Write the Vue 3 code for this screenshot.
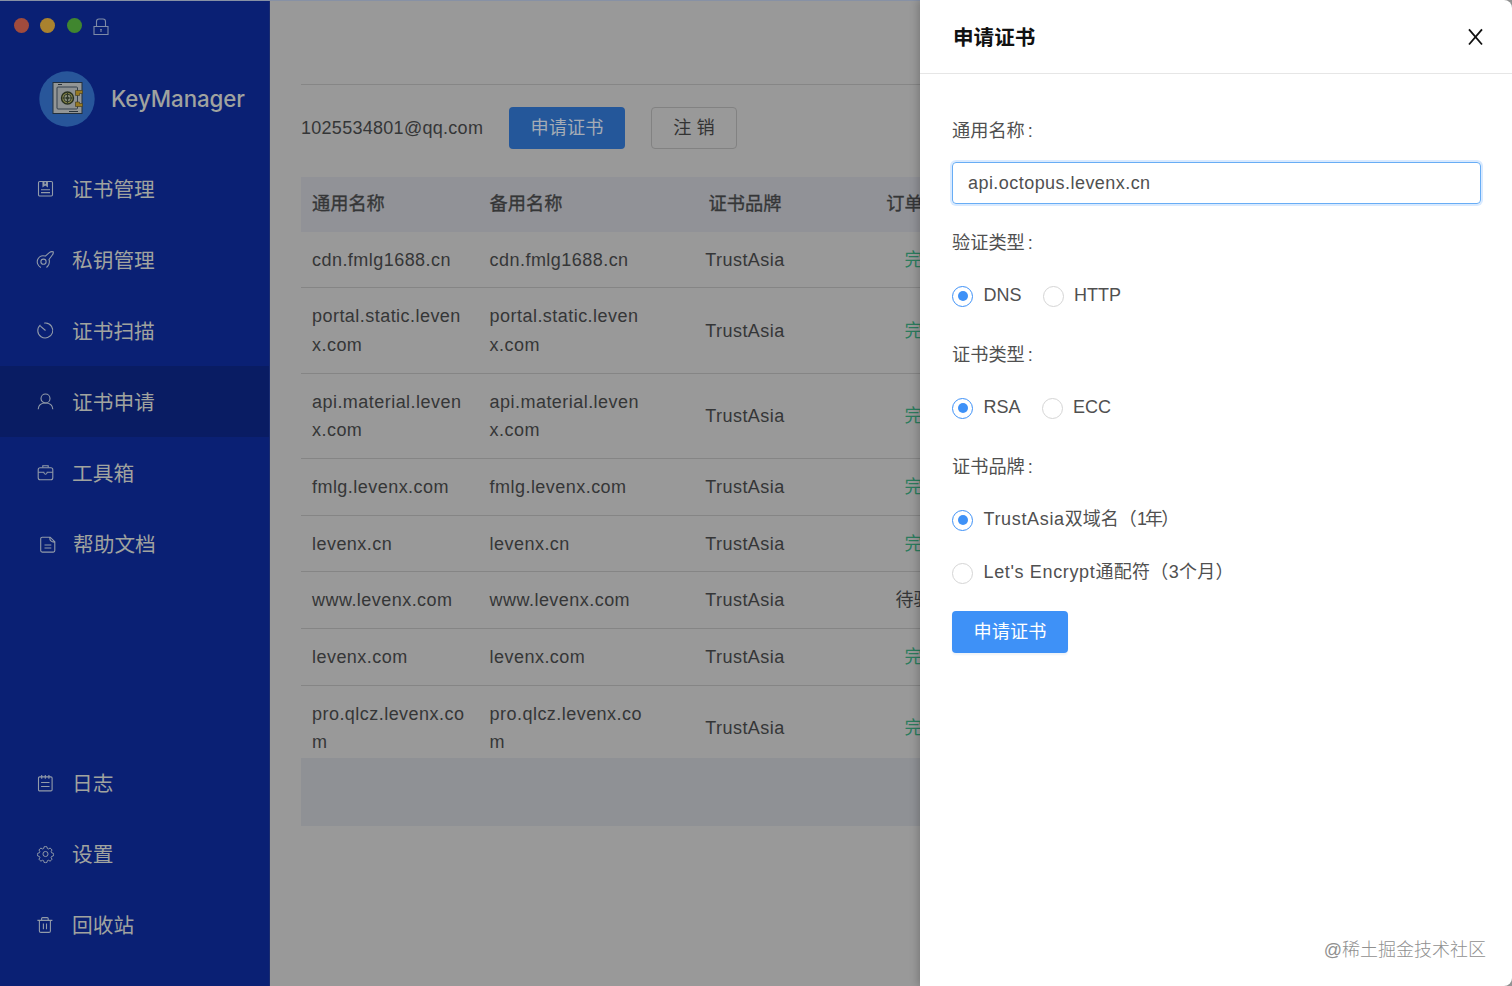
<script setup>
const icons = {
  book: '<rect x="1.5" y="1.5" width="14" height="14.5" rx="1.2"/><path d="M6 2v4.500l2.200-1.700 2.200 1.700V2M7 2v3M9.300 2v3M4 9.700h9M4 12.600h9"/>',
  key: '<circle cx="6.500" cy="10.700" r="2.600"/><path d="M3.800 16.400A6.300 6.300 0 0 1 .8 8.200A6.300 6.300 0 0 1 8.300 5.100L12.600 1.400Q14.200.2 16.200.8Q16.600 2.600 15.300 4L12 8.500Q12.800 10.500 11.900 13.200Q11.200 14.900 9.500 16.500"/>',
  scan: '<path d="M3.400 2.800A7.500 7.500 0 1 0 8.800 1a7.500 7.500 0 0 0-1.500.1M3.400 4.200L8.500 8.500"/>',
  user: '<circle cx="8.500" cy="5.500" r="4.500"/><path d="M1.200 16.200c.2-4 3-6.200 7.300-6.200s7.100 2.200 7.300 6.200"/>',
  box: '<rect x="1.200" y="3.800" width="14.600" height="12" rx="2"/><path d="M5.800 3.500V1.800h5.400v1.700M1.200 8.200h5.600c.2 1.500.8 2 1.700 2s1.500-.5 1.700-2h5.600"/>',
  doc: '<path d="M3.200 1.200h8l4.600 4.600v8.800q0 1.500-1.500 1.500H3.200q-1.500 0-1.500-1.500V2.700q0-1.500 1.500-1.500zM10.800 1.500q-.3 4.500 4.700 4.700M5.500 9h6.800M5.500 12h6.800"/>',
  log: '<rect x="1.500" y="1.900" width="13.600" height="14" rx="1.200"/><path d="M4.700 0v3.800M8.300 0v3.800M11.900 0v3.800M4.100 7.500h8.400M4.100 11.500h8.400"/>',
  gear: '<g transform="translate(8.500 8) scale(.88) translate(-8.500 -8.500)"><circle cx="8.500" cy="8.500" r="2.900"/><path d="M6.900.3Q8.500-.3 10.100.3l.5 2 1.200.5 1.900-1q1.500.8 2.200 2.200l-1 1.900.5 1.200 2 .6q.5 1.500 0 3l-2 .6-.5 1.200 1 1.900q-.8 1.500-2.200 2.200l-1.900-1-1.200.5-.5 2q-1.600.5-3.200 0l-.5-2-1.200-.5-1.900 1Q1.800 15.800 1.100 14.400l1-1.900-.5-1.200-2-.6q-.5-1.500 0-3l2-.6.5-1.200-1-1.900Q1.900 2.500 3.300 1.800l1.900 1 1.200-.5z"/></g>',
  trash: '<path d="M.4 3.400h15M4.600 3.200V1.600Q4.600.6 5.600.6h4.600q1 0 1 1v1.600M2.400 3.400v10.500Q2.400 15.400 3.900 15.400h8q1.500 0 1.500-1.500V3.400M6.400 6.500v5.700M9.500 6.500v5.700"/>'
}
const menu = [
  { t: '证书管理', i: 'book' },
  { t: '私钥管理', i: 'key' },
  { t: '证书扫描', i: 'scan' },
  { t: '证书申请', i: 'user', on: true },
  { t: '工具箱', i: 'box' },
  { t: '帮助文档', i: 'doc', shift: true }
]
const bottom = [
  { t: '日志', i: 'log' },
  { t: '设置', i: 'gear' },
  { t: '回收站', i: 'trash' }
]
const rows = [
  ['cdn.fmlg1688.cn', 1],
  ['portal.static.leven\nx.com', 1],
  ['api.material.leven\nx.com', 1],
  ['fmlg.levenx.com', 1],
  ['levenx.cn', 1],
  ['www.levenx.com', 0],
  ['levenx.com', 1],
  ['pro.qlcz.levenx.co\nm', 1]
]
</script>

<template>
  <div class="window">
    <aside class="side">
      <div class="lights">
        <i class="red"></i><i class="amber"></i><i class="green"></i>
        <svg class="lock" width="16" height="18" viewBox="0 0 16 18"><path d="M1 8.500h14v8H1zM3.500 8.500V3.500q0-2.500 2.500-2.500h4q2.500 0 2.500 2.500v5M8 11v3M7.200 11.500h1.600" /></svg>
      </div>
      <div class="brand">
        <svg width="56" height="56" viewBox="0 0 56 56">
          <circle cx="28" cy="28" r="27.700" fill="#28569a" />
          <rect x="14" y="11.500" width="29" height="31" fill="#939696" stroke="#23303d" />
          <rect x="18" y="16" width="20.500" height="22" rx="1" fill="#8d9192" stroke="#34404c" />
          <path d="M19 13.500h4M30 40.500h9" stroke="#28333c" />
          <circle cx="28.500" cy="27" r="6" fill="#858547" stroke="#28301f" stroke-width="1.400" />
          <circle cx="28.500" cy="27" r="3.800" fill="#8c9281" stroke="#333b2c" />
          <path d="M28.500 22v10M23.500 27h10" stroke="#303829" stroke-width="1.200" />
          <circle cx="28.500" cy="27" r="1.500" fill="#303829" />
          <path d="M36.500 19.500h7v3h-3v2h-4zM36.500 31h4v1.500h3v3h-7z" fill="#967922" stroke="#474022" stroke-width=".7" />
        </svg>
        <span>KeyManager</span>
      </div>
      <nav>
        <a v-for="m in menu" :key="m.t" :class="{ on: m.on, shift: m.shift }">
          <svg width="17" height="17" viewBox="0 0 17 17" v-html="icons[m.i]"></svg><span>{{ m.t }}</span>
        </a>
      </nav>
      <nav class="foot">
        <a v-for="m in bottom" :key="m.t">
          <svg width="17" height="17" viewBox="0 0 17 17" v-html="icons[m.i]"></svg><span>{{ m.t }}</span>
        </a>
      </nav>
    </aside>

    <main class="main">
      <div class="toolbar">
        <span class="mail">1025534801@qq.com</span>
        <button class="btn dim">申请证书</button>
        <button class="btn plain">注 销</button>
      </div>
      <div class="table">
        <div class="row head">
          <span>通用名称</span><span>备用名称</span><span class="mid">证书品牌</span><span class="mid">订单状态</span>
        </div>
        <div class="body">
          <div v-for="r in rows" :key="r[0]" class="row">
            <span>{{ r[0] }}</span><span>{{ r[0] }}</span><span class="mid">TrustAsia</span>
            <span class="mid" :class="r[1] ? 'done' : 'wait'">{{ r[1] ? '完成' : '待验证' }}</span>
          </div>
        </div>
        <div class="strip"></div>
      </div>
    </main>

    <section class="drawer">
      <header>
        <h1>申请证书</h1>
        <svg width="16" height="18" viewBox="0 0 16 18"><path d="M2 1.300L15 16.500M15 1.300L2 16.500" fill="none" stroke="#111" stroke-width="1.800" /></svg>
      </header>
      <div class="form">
        <label>通用名称<b>:</b></label>
        <div class="field">api.octopus.levenx.cn</div>
        <label class="l2">验证类型<b>:</b></label>
        <div class="radios"><span class="r"><i class="on"></i>DNS</span><span class="r"><i></i>HTTP</span></div>
        <label class="l3">证书类型<b>:</b></label>
        <div class="radios"><span class="r"><i class="on"></i>RSA</span><span class="r"><i></i>ECC</span></div>
        <label class="l3">证书品牌<b>:</b></label>
        <div class="radios"><span class="r"><i class="on"></i><span class="ta"><em>TrustAsia</em>双域名（<u>1年</u>）</span></span></div>
        <div class="radios"><span class="r"><i></i><span class="le"><em>Let's Encrypt</em>通配符（3个月）</span></span></div>
        <button class="btn">申请证书</button>
      </div>
      <footer>@稀土掘金技术社区</footer>
    </section>
  </div>
</template>

<style>
body { background: #999; overflow: hidden; }
</style>

<style scoped>
* { box-sizing: border-box; }
.window { position: relative; display: flex; width: 1512px; height: 986px; overflow: hidden; background: #999; font: 18px/29px "Liberation Sans", "Noto Sans CJK SC", sans-serif; color: #353637; }
.window::before { content: ""; position: absolute; left: 0; top: 0; width: 920px; height: 1px; background: #8791a5; }
.side { width: 270px; height: 986px; background: #0a2074; color: #a0a39f; display: flex; flex-direction: column; border-right: 1px solid #1a2c70; }
.lights { display: flex; padding: 17px 0 0 14px; height: 71px; }
.lights i { width: 15px; height: 15px; border-radius: 50%; margin-right: 11.300px; margin-top: 1px; }
.red { background: #a14b3d; }
.amber { background: #aa822e; }
.green { background: #40862f; }
.lock { fill: none; stroke: #7f8ba7; stroke-width: 1.100; margin-top: 1px; }
.brand { display: flex; align-items: center; padding-left: 39px; height: 56px; gap: 16px; font: 500 22.300px/30px Inter, sans-serif; letter-spacing: -.08px; }
nav { margin-top: 26px; }
nav a { display: flex; align-items: center; height: 71.100px; padding-left: 37px; font-size: 20.700px; }
nav a span { padding-top: 1px; }
nav a.on { background: #091c63; }
nav a svg { fill: none; stroke: #929ba9; stroke-width: 1.100; margin-right: 18px; overflow: visible; }
nav a.shift { padding-left: 39px; }
nav a.shift svg { margin-right: 17px; }
nav.foot { margin-top: auto; margin-bottom: 25px; }
.main { width: 650px; padding: 84px 0 0 31px; }
.toolbar { border-top: 1px solid #868686; height: 93px; display: flex; align-items: flex-start; padding-top: 22px; }
.mail { width: 208px; line-height: 42px; letter-spacing: .28px; white-space: nowrap; }
.btn { border: 0; border-radius: 4px; width: 116px; height: 42px; padding: 0; background: #3e91f7; color: #fff; font: 18.200px/42px "Liberation Sans", "Noto Sans CJK SC", sans-serif; }
.btn.dim { background: #24579a; color: #a5acb5; }
.btn.plain { width: 86px; margin-left: 26px; background: transparent; border: 1px solid #828282; color: #333; line-height: 40px; }
.table { width: 710.400px; }
.row { display: grid; grid-template-columns: repeat(4, 177.600px); align-items: center; padding: 14px 0 12.850px; border-bottom: 1px solid #858585; letter-spacing: .46px; line-height: 28.800px; }
.row > span { padding-left: 11px; white-space: pre; }
.row > .mid { padding: 0; text-align: center; }
.head { height: 54.500px; padding: 0; border: 0; background: #919297; font-size: 18.200px; letter-spacing: 0; -webkit-text-stroke: .35px #353637; }
.body { height: 526.500px; overflow: hidden; }
.body .row:last-child { border: 0; }
.done { color: #2b7c5d; }
.row > .done, .row > .wait { letter-spacing: 0; }
.strip { height: 68px; background: #8f9195; }
.drawer { position: absolute; left: 920px; top: 0; width: 592px; height: 986px; background: #fff; border-radius: 0 8px 8px 0; box-shadow: -2px 0 8px rgba(0,0,0,.22); color: #505050; }
header { height: 73.500px; border-bottom: 1.500px solid #e6e6e6; display: flex; align-items: center; justify-content: space-between; padding: 2px 29px 0 33px; }
h1 { margin: 0; color: #111; font-size: 20.600px; font-weight: 700; }
.form { padding: 42px 31px 0 32px; display: flex; flex-direction: column; align-items: flex-start; }
label { font-size: 18.200px; line-height: 30px; }
label b { font-weight: 400; margin-left: 3px; }
.field { width: 529px; height: 42px; margin: 16px 0 0; border: 1.500px solid #68adf5; border-radius: 4px; box-shadow: 0 0 0 2px #d9eaff; padding-left: 15px; line-height: 41px; letter-spacing: .45px; }
.l2 { margin-top: 24px; }
.radios { display: flex; height: 30px; margin-top: 23px; align-items: center; gap: 21px; }
.r { display: flex; align-items: center; }
.r i { width: 21px; height: 21px; border: 1px solid #d5d5d5; border-radius: 50%; margin: 1px 10.500px 0 0; display: flex; align-items: center; justify-content: center; }
.r i.on { border: 1.500px solid #3e91f7; }
.r i.on::after { content: ""; width: 10px; height: 10px; border-radius: 50%; background: #3e91f7; }
.r em { font-style: normal; letter-spacing: .65px; }
.r u { text-decoration: none; letter-spacing: -1.800px; }
.ta { letter-spacing: .05px; }
.le { letter-spacing: .3px; }
.l3 { margin-top: 29px; }
.form .btn { margin-top: 23px; box-shadow: 0 2px 2px #eef3f8; }
footer { position: absolute; right: 26px; bottom: 21px; font-size: 18px; color: #909090; white-space: nowrap; font-weight: 300; }
</style>
